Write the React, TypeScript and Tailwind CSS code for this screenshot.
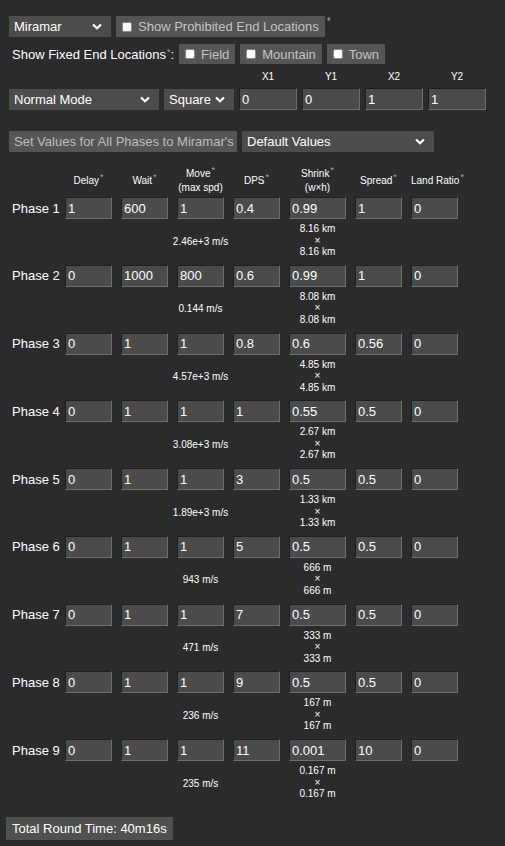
import type React from "react";

type Phase = {
  vals: string[];
  speed: string;
  size: string;
};

const phases: Phase[] = [
  { vals: ["1", "600", "1", "0.4", "0.99", "1", "0"], speed: "2.46e+3 m/s", size: "8.16 km" },
  { vals: ["0", "1000", "800", "0.6", "0.99", "1", "0"], speed: "0.144 m/s", size: "8.08 km" },
  { vals: ["0", "1", "1", "0.8", "0.6", "0.56", "0"], speed: "4.57e+3 m/s", size: "4.85 km" },
  { vals: ["0", "1", "1", "1", "0.55", "0.5", "0"], speed: "3.08e+3 m/s", size: "2.67 km" },
  { vals: ["0", "1", "1", "3", "0.5", "0.5", "0"], speed: "1.89e+3 m/s", size: "1.33 km" },
  { vals: ["0", "1", "1", "5", "0.5", "0.5", "0"], speed: "943 m/s", size: "666 m" },
  { vals: ["0", "1", "1", "7", "0.5", "0.5", "0"], speed: "471 m/s", size: "333 m" },
  { vals: ["0", "1", "1", "9", "0.5", "0.5", "0"], speed: "236 m/s", size: "167 m" },
  { vals: ["0", "1", "1", "11", "0.001", "10", "0"], speed: "235 m/s", size: "0.167 m" },
];

const Star: React.FC = () => (
  <span className="relative -top-[4px] ml-[1px] text-[9px] leading-none text-[#a8a8a8]">*</span>
);

const Chevron: React.FC = () => (
  <svg width="10" height="7" viewBox="0 0 10 7" className="shrink-0">
    <path d="M1 1.5 L5 5.2 L9 1.5" fill="none" stroke="#fff" strokeWidth="2.2" />
  </svg>
);

const FakeSelect: React.FC<{ label: string; width: string }> = ({ label, width }) => (
  <div
    className={`flex h-[21px] items-center justify-between bg-[#4c4c4c] pl-[5px] pr-[9px] text-white ${width}`}
  >
    <span>{label}</span>
    <Chevron />
  </div>
);

const Box: React.FC = () => (
  <span className="inline-block h-[10px] w-[10px] rounded-[2px] border border-[#8a8a8a] bg-white" />
);

const CheckButton: React.FC<{ label: string; h?: string }> = ({ label, h = "h-[21px]" }) => (
  <div className={`flex items-center gap-[6px] bg-[#555555] px-[6px] text-[#c4c4c4] ${h}`}>
    <Box />
    <span>{label}</span>
  </div>
);

const input =
  "h-[22px] w-full border border-t-[#1f1f1f] border-l-[#1f1f1f] border-r-[#6f6f6f] border-b-[#6f6f6f] bg-[#4b4b4b] pl-[2px] text-[13px] text-white outline-none";

const cols = "grid grid-cols-[44px_47px_47px_47px_47px_57px_47px_47px] gap-x-[9px]";

export default function App() {
  return (
    <div className="min-h-screen bg-[#2b2b2d] px-[9px] pt-[16px] font-['Liberation_Sans',Arial,sans-serif] text-[13px] leading-[15px] text-white">
      {/* map + prohibited */}
      <div className="flex h-[21px] items-start gap-[5px]">
        <FakeSelect label="Miramar" width="w-[102px]" />
        <CheckButton label="Show Prohibited End Locations" />
        <span className="-ml-[3px] text-[10px] leading-[12px] text-[#a8a8a8]">*</span>
      </div>

      {/* fixed end locations */}
      <div className="mt-[7px] flex h-[20px] items-center">
        <span className="pl-[3px] pr-[5px]">
          Show Fixed End Locations<Star />:
        </span>
        <div className="flex gap-[5px]">
          <CheckButton label="Field" h="h-[20px]" />
          <CheckButton label="Mountain" h="h-[20px]" />
          <CheckButton label="Town" h="h-[20px]" />
        </div>
      </div>

      {/* mode + coords */}
      <div className="mt-[7px] flex items-end gap-[5px]">
        <FakeSelect label="Normal Mode" width="w-[150px]" />
        <FakeSelect label="Square" width="w-[70px]" />
        {["X1", "Y1", "X2", "Y2"].map((k, i) => (
          <div key={k} className="flex w-[58px] flex-col items-center">
            <span className="mb-[5px] text-[10px] leading-[12px]">{k}</span>
            <input className={`${input} h-[21px]`} defaultValue={i < 2 ? "0" : "1"} />
          </div>
        ))}
      </div>

      {/* presets */}
      <div className="mt-[21px] flex gap-[5px]">
        <div className="flex h-[21px] w-[228px] items-center bg-[#555555] pl-[5px] text-[#bdbdbd]">
          Set Values for All Phases to Miramar's
        </div>
        <FakeSelect label="Default Values" width="w-[192px]" />
      </div>

      {/* phase table */}
      <div className="pl-[3px]">
        <div className={`${cols} mt-[13px] h-[32px] items-center text-center text-[10px] leading-[14px]`}>
          <span />
          <span>Delay<Star /></span>
          <span>Wait<Star /></span>
          <span className="flex flex-col">
            <span>Move<Star /></span>
            <span>(max spd)</span>
          </span>
          <span>DPS<Star /></span>
          <span className="flex flex-col">
            <span>Shrink<Star /></span>
            <span>(w×h)</span>
          </span>
          <span>Spread<Star /></span>
          <span className="whitespace-nowrap">Land Ratio<Star /></span>
        </div>

        {phases.map((p, i) => (
          <div key={i} className="h-[67.75px]">
            <div className={`${cols} items-center`}>
              <span className="whitespace-nowrap">Phase {i + 1}</span>
              {p.vals.map((v, j) => (
                <input key={j} className={input} defaultValue={v} />
              ))}
            </div>
            <div className={`${cols} mt-[4px] items-center text-center text-[10px] leading-[11.5px]`}>
              <span />
              <span />
              <span />
              <span className="relative -mx-[10px] whitespace-nowrap pt-[2px]">{p.speed}</span>
              <span />
              <span className="flex flex-col whitespace-nowrap">
                <span>{p.size}</span>
                <span>×</span>
                <span>{p.size}</span>
              </span>
            </div>
          </div>
        ))}
      </div>

      <div className="-ml-[3px] mt-[10px] inline-flex h-[23px] items-center bg-[#505050] px-[6px]">
        Total Round Time: 40m16s
      </div>
    </div>
  );
}
